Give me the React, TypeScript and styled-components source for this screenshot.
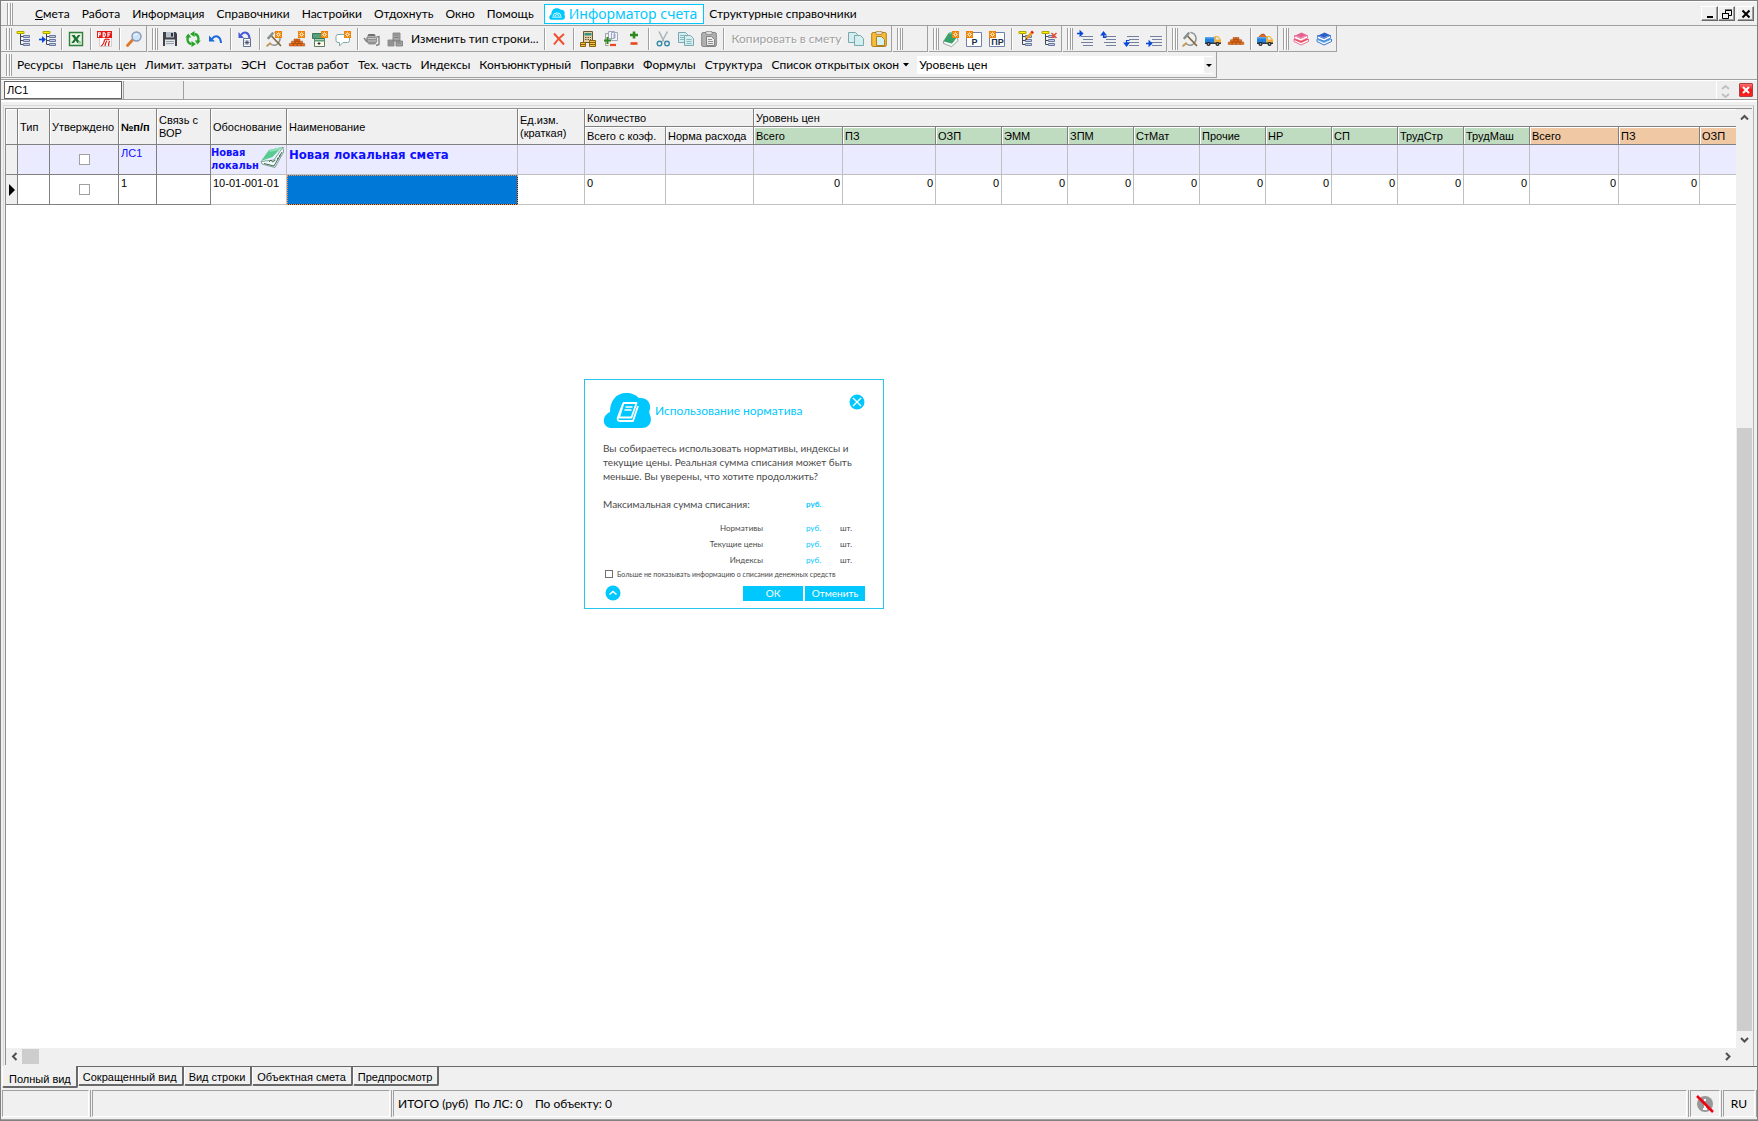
import React from 'react';
import styled, { createGlobalStyle, css } from 'styled-components';

const UI = '"Lato", "Noto Sans", sans-serif';
const GRID = '"Liberation Sans", Arial, sans-serif';
const BOLD = '"DejaVu Sans Condensed", "DejaVu Sans", sans-serif';
const CYAN = '#00c8ff';

const Global = createGlobalStyle`
  * { box-sizing: border-box; }
  body { margin: 0; background: #f0f0f0; color: #000; font: 12px/16px ${UI}; }
  button, input, select { font: inherit; color: inherit; margin: 0; }
  button { background: none; border: 0; padding: 0; }
`;

/* ---------- window frame ---------- */
const Window = styled.div`
  height: 100vh;
  display: flex;
  flex-direction: column;
  overflow: hidden;
  background: #f0f0f0;
  border: 1px solid #808080;
`;
const Row = styled.div<{ $h: number }>`
  display: flex;
  flex: none;
  height: ${p => p.$h}px;
`;
const MenuRow = styled(Row)`
  align-items: center;
  border-top: 1px solid #fff;
  border-bottom: 1px solid #a0a0a0;
  padding: 0 3px 0 6px;
`;
const Grip = styled.span`
  flex: none;
  width: 6px;
  height: 22px;
  margin-right: 1px;
  border: solid #a0a0a0;
  border-width: 0 1px;
  background: linear-gradient(90deg, #fff 1px, #f0f0f0 1px, #f0f0f0 2px, #a0a0a0 2px, #a0a0a0 3px, #fff 3px);
`;
const Menu = styled.nav`
  display: flex;
  gap: 12px;
  padding: 0 10px 0 21px;
`;
const TextButton = styled.button`
  white-space: nowrap;
`;
const Informer = styled.button`
  display: flex;
  align-items: center;
  gap: 4px;
  height: 20px;
  padding: 0 6px 0 4px;
  border: 1px solid ${CYAN};
  background: #fff;
  color: ${CYAN};
  font: 14px/18px "Noto Sans", sans-serif;
`;
const RefButton = styled(TextButton)`
  margin: 0 auto 0 5px;
`;
const MdiButtons = styled.div`
  display: flex;
  button { display: flex; width: 17px; height: 15px; align-items: center; justify-content: center;
    border: 1px solid; border-color: #fff #696969 #696969 #fff; box-shadow: inset -1px -1px #a0a0a0; }
  button:last-child { margin-left: 2px; }
`;

/* ---------- toolbars ---------- */
const Band = styled.div<{ $first?: boolean }>`
  display: flex;
  flex: none;
  align-items: center;
  height: 26px;
  padding-left: ${p => (p.$first ? 5 : 4)}px;
  margin-right: 1px;
  border-right: 1px solid #a0a0a0;
  border-bottom: 1px solid #a0a0a0;
`;
const Tool = styled.button`
  display: flex;
  flex: none;
  width: 23px;
  height: 22px;
  padding-left: 3px;
  align-items: center;
  svg { overflow: visible; }
`;
const ToolText = styled.button`
  padding: 0 4px;
  white-space: nowrap;
  &:disabled { color: #a0a0a0; text-shadow: 1px 1px #fff; }
`;
const Sep = styled.i`
  flex: none;
  width: 6px;
  height: 22px;
  background: linear-gradient(90deg, transparent 2px, #a0a0a0 2px, #a0a0a0 3px, #fff 3px, #fff 4px, transparent 4px);
`;
const Blank = styled.i`
  width: 23px;
`;
const PanelBand = styled(Band)`
  padding-right: 3px;
`;
const PanelButtons = styled.div`
  display: flex;
  gap: 9px;
  padding: 0 8px 0 4px;
`;
const DropMark = styled.svg`
  margin-left: 4px;
  vertical-align: middle;
`;
const SelectBox = styled.div`
  display: flex;
  position: relative;
  width: 296px;
  height: 18px;
  background: #fff;
  select { appearance: none; width: 100%; border: 0; padding: 0 12px 0 2px; background: transparent; outline: none; }
  svg { position: absolute; right: 0; top: 1px; background: #f0f0f0; pointer-events: none; }
`;

/* ---------- address line ---------- */
const AddressRow = styled(Row)`
  margin-top: 1px;
  border-top: 1px solid #a0a0a0;
  border-bottom: 1px solid #a0a0a0;
  box-shadow: inset 0 1px #fff, 0 2px #fff;
  padding: 1px 4px 1px 3px;
  align-items: center;
  background: #eee;
`;
const CellInput = styled.input`
  width: 118px;
  height: 18px;
  padding: 0 2px;
  border: 1px solid #646464;
  background: #fff;
  font: 11px/16px ${GRID};
`;
const AddressPart = styled.div<{ $w: number }>`
  width: ${p => p.$w}px;
  height: 18px;
  margin-left: 1px;
  border-left: 1px solid #a0a0a0;
`;
const Spin = styled.div`
  width: 23px;
  height: 18px;
  margin-left: auto;
  padding-left: 4px;
  border-left: 1px solid #fff;
`;
const CloseRed = styled.button`
  display: flex;
  width: 14px;
  height: 14px;
  align-items: center;
  justify-content: center;
  border: 1px solid #b04040;
  border-radius: 1px;
  background: linear-gradient(#ff7070, #f01818 50%, #ff2020);
`;

/* ---------- grid ---------- */
const GridFrame = styled.main`
  flex: 1;
  min-height: 0;
  display: flex;
  flex-direction: column;
  margin: 5px 3px 0 2px;
  padding: 2px 1px 1px 1px;
  border: 1px solid #d8d8d8;
  border-right-color: #b4b4b4;
  border-bottom: 0;
`;
const GridInner = styled.div`
  flex: 1;
  min-height: 0;
  display: flex;
  border: solid #909090;
  border-width: 1px 0 0 1px;
`;
const GridView = styled.div`
  flex: 1;
  min-width: 0;
  overflow: hidden;
  background: #fff;
`;
const Table = styled.table`
  table-layout: fixed;
  width: 0;
  border-collapse: separate;
  border-spacing: 0;
  font: 11px/13px ${GRID};
`;
type Tone = 'plain' | 'green' | 'orange';
const tones = { plain: '#f0f0f0', green: '#c0dcc0', orange: '#f0c8a4' };
const Th = styled.th<{ $tone?: Tone; $strong?: boolean }>`
  height: 18px;
  padding: 1px 0 0 2px;
  overflow: hidden;
  text-align: left;
  font-weight: ${p => (p.$strong ? 700 : 400)};
  background: ${p => tones[p.$tone ?? 'plain']};
  border: solid #808080;
  border-width: 0 1px 1px 0;
  box-shadow: inset 1px 1px #fff;
  white-space: nowrap;
`;
const Td = styled.td<{
  $kind?: 'fixed' | 'mark' | 'basis';
  $row?: 'head';
  $num?: boolean;
  $active?: boolean;
}>`
  height: 30px;
  padding: 2px 2px 0 2px;
  overflow: hidden;
  vertical-align: top;
  text-align: ${p => (p.$num ? 'right' : 'left')};
  background: ${p => (p.$row ? '#ebebff' : '#fff')};
  color: ${p => (p.$row ? '#1010ff' : '#000')};
  border: solid #c0c0c0;
  border-width: 0 1px 1px 0;
  ${p => (p.$kind === 'fixed' || p.$kind === 'mark') && css`border-color: #808080;`}
  ${p => p.$kind === 'mark' && css`background: #f0f0f0; padding: 9px 0 0 2px;`}
  ${p => p.$kind === 'basis' && css`padding: 1px 2px 0 0;`}
  ${p => p.$active && css`background: #0078d7; outline: 1px dotted #ff9040; outline-offset: -1px; border-color: #303030;`}
`;
const Center = styled.div`
  display: flex;
  justify-content: center;
  padding-top: 7px;
`;
const Check = styled.input`
  appearance: none;
  width: 11px;
  height: 11px;
  margin: 0;
  border: 1px solid #a0a0a0;
  background: #fff;
`;
const Basis = styled.div`
  display: flex;
  justify-content: space-between;
  font: bold 11px/13px ${BOLD};
  span { width: 49px; overflow: hidden; }
  svg { flex: none; }
`;
const EstimateName = styled.div`
  font: bold 13px/16px ${BOLD};
`;

/* ---------- scroll bars ---------- */
const VBar = styled.div`
  display: flex;
  flex-direction: column;
  flex: none;
  width: 16px;
  background: #f0f0f0;
`;
const VTrack = styled.div`
  flex: 1;
  display: flex;
  flex-direction: column;
  justify-content: flex-end;
`;
const VThumb = styled.div`
  height: 66.6%;
  margin-left: 1px;
  background: #cdcdcd;
`;
const Arrow = styled.button`
  display: flex;
  align-items: center;
  justify-content: center;
  width: 16px;
  height: 17px;
`;
const HBar = styled.div`
  display: flex;
  align-items: center;
  height: 17px;
  flex: none;
  padding-right: 17px;
  border-left: 1px solid #909090;
`;
const HThumb = styled.div`
  width: 17px;
  height: 15px;
  margin-right: auto;
  background: #cdcdcd;
`;

/* ---------- tabs and status ---------- */
const Tabs = styled.div`
  display: flex;
  flex: none;
  align-items: flex-start;
  height: 24px;
  padding-left: 1px;
  font: 11px/14px ${GRID};
`;
const Tab = styled.button<{ $on?: boolean }>`
  height: 19px;
  margin-top: 1px;
  padding: 2px 5px 0 4px;
  border: solid #696969;
  border-width: 0 2px 2px 1px;
  border-left-color: #fff;
  box-shadow: 0 -1px #696969;
  border-radius: 0 0 2px 2px;
  white-space: nowrap;
  ${p => p.$on && css`height: 22px; margin-top: 0; padding: 5px 5px 0 6px; box-shadow: none;`}
`;
const TabRest = styled.div`
  flex: 1;
  height: 1px;
  background: #696969;
`;
const Status = styled.footer`
  display: flex;
  flex: none;
  gap: 3px;
  height: 30px;
  padding: 0 2px 0 1px;
  border-bottom: 1px solid #a0a0a0;
`;
const StatusPart = styled.div<{ $w?: number }>`
  display: flex;
  align-items: center;
  ${p => (p.$w ? `width: ${p.$w}px; flex: none; ` : 'flex: 1;')}
  padding: 0 4px;
  margin-bottom: 2px;
  border: 1px solid;
  border-color: #a0a0a0 #fff #fff #a0a0a0;
  box-shadow: 1px 0 #f0f0f0, 2px 0 #a0a0a0;
  white-space: pre;
`;
const StatusCenter = styled(StatusPart)`
  justify-content: center;
`;

/* ---------- dialog ---------- */
const Dialog = styled.section`
  position: absolute;
  left: 584px;
  top: 379px;
  width: 300px;
  height: 230px;
  display: flex;
  flex-direction: column;
  padding: 13px 18px 7px;
  border: 1px solid #28c4ee;
  background: #fff;
  color: #4a4a4a;
  font: 10px/14px ${UI};
`;
const DialogHead = styled.header`
  display: flex;
  height: 36px;
  color: ${CYAN};
  h1 { flex: 1; margin: 10px 0 0 4px; font: 12px/16px ${UI}; }
  button { height: 18px; padding-top: 1px; }
`;
const DialogText = styled.p`
  margin: 12px 0 0;
  white-space: nowrap;
`;
const Sums = styled.dl`
  display: grid;
  grid-template-columns: 160px 1fr 25px;
  grid-template-rows: 23px;
  grid-auto-rows: 16px;
  align-items: center;
  margin: 14px 0 0;
  font-size: 8px;
  dt { text-align: right; }
  dd { margin: 0; }
  dt.total { text-align: left; font-size: 10px; }
  .total { align-self: start; font-weight: 400; }
  dd.total { font-weight: 700; }
`;
const Rub = styled.dd`
  && { padding-left: 43px; color: ${CYAN}; }
`;
const Dont = styled.label`
  display: flex;
  align-items: center;
  gap: 4px;
  height: 12px;
  margin-left: 2px;
  font-size: 7px;
  line-height: 10px;
  white-space: nowrap;
  input { width: 8px; height: 8px; border-color: #707070; }
`;
const Actions = styled.div`
  display: flex;
  gap: 2px;
  margin-top: 5px;
  align-items: center;
`;
const Up = styled.button`
  height: 16px;
  margin: 0 auto 0 2px;
`;
const Action = styled.button`
  width: 60px;
  height: 15px;
  background: ${CYAN};
  color: #fff;
  font: 10px/15px ${UI};
`;

/* ---------- icons ---------- */
const tree = (
  <g fill="none" stroke="#6878a0">
    <path d="M4.500 3v10.500H8M4.500 5.500H8M4.500 9.500H8" stroke="#404858" />
    <path d="M7.500 4.500h6v2h-6zM7.500 8.500h6v2h-6zM7.500 12.500h6v2h-6z" fill="#c4cce4" />
    <path d="M1 .5h7v2H1z" fill="#f6f000" stroke="#b0a800" />
  </g>
);
const spark = (
  <g>
    <path d="M9 0h7v7H9z" fill="#f08000" />
    <path d="M12.500 .8v5.400M9.800 3.500h5.400M10.500 1.500l4 4M14.500 1.500l-4 4" stroke="#fff4d8" strokeWidth=".7" />
    <circle cx="12.500" cy="3.500" r="1.600" fill="#fff4d8" />
    <circle cx="12.500" cy="3.500" r=".9" fill="#f08000" />
  </g>
);
const sparkLeft = <g transform="translate(-9 0)">{spark}</g>;
const bricks = (
  <g fill="#e87020" stroke="#a04810" strokeWidth=".5">
    <path d="M5 6.500h3v2.200H5zM8 6.500h3v2.200H8zM2.500 8.700h3.700v2.300H2.500zM6.200 8.700h3.700v2.300H6.200zM9.900 8.700h3.700v2.300H9.900zM.3 11h3.900v2.500H.3zM4.200 11h3.900v2.500H4.200zM8.100 11h3.900v2.500H8.100zM12 11h3.700v2.500H12z" />
  </g>
);
const hammer = (
  <g fill="none" strokeLinecap="round">
    <path d="M9 1.500c5 1 7 7 2.500 11.500-2.500 2-5.500 1.200-7.500-.5" stroke="#8c9490" strokeWidth="1.500" />
    <path d="M5 4.500l9.500 10" stroke="#806840" strokeWidth="1.700" />
    <path d="M2.500 7l4-4.500" stroke="#88908c" strokeWidth="2.600" />
    <path d="M1.200 14.800l3-2.500" stroke="#c89858" strokeWidth="2" />
  </g>
);
const truck = (
  <g>
    <path d="M0 6h9.500v6H0z" fill="#2080e0" />
    <path d="M0 6h9.500v1.500H0z" fill="#58a8f0" />
    <path d="M9.500 5h3.500L16 8.500V12H9.500z" fill="#f8b030" />
    <path d="M11 6.200h1.700l2 2.300H11z" fill="#d8f0ff" />
    <path d="M0 11.500h16v1.500H0z" fill="#303840" />
    <circle cx="3.500" cy="13" r="2" fill="#202428" /><circle cx="12.500" cy="13" r="2" fill="#202428" />
    <circle cx="3.500" cy="13" r=".8" fill="#ccc" /><circle cx="12.500" cy="13" r=".8" fill="#ccc" />
  </g>
);
const books = (a: string, b: string) => (
  <g strokeLinejoin="round">
    <path d="M1 10.500l7 3.500 7.500-3.500v-2.200H1z" fill="#fff" stroke={a} strokeWidth=".9" />
    <path d="M.6 8.800L8 12l7.700-3.500L13 7H3z" fill={b} />
    <path d="M1.500 7.500L8 10l6.500-3V4.500H1.500z" fill="#fff" stroke={a} strokeWidth=".7" />
    <path d="M1 5l7 3 7-3.500L8.500 1.500z" fill={a} />
    <path d="M3 5l5 2 4.500-2.200" stroke="#fff" strokeOpacity=".5" fill="none" strokeWidth=".8" />
  </g>
);
const lines = <path d="M4 5.500h12M6 8.500h10M4 11.500h12M6 14.500h10" stroke="#7480a0" />;
const arrowR = (x: number, y: number) => (
  <path transform={`translate(${x} ${y})`} d="M0 2.500h4M3.200 .3L5.600 2.500 3.200 4.700z" stroke="#0848d8" strokeWidth="1.300" fill="#0848d8" />
);
const greenBook = (
  <g strokeLinejoin="round">
    <path d="M.5 10v2.500l8 3.200 6.500-6-1-3.700-5 6z" fill="#f4f8f6" stroke="#70887c" strokeWidth=".7" />
    <path d="M.5 10L5.500 2l9 3L9 12.500z" fill="#38a068" />
    <path d="M5.500 2l2-1 8 2.500-1 1.500z" fill="#58b888" />
  </g>
);
const docLetter = (t: string) => (
  <g>
    <path d="M.5 1.500h15v14H.5z" fill="#fff" stroke="#7080a8" />
    <text x="8.500" y="13.500" fontSize="9" fontWeight="700" fontFamily="Liberation Sans" textAnchor="middle" fill="#203048">{t}</text>
    {sparkLeft}
  </g>
);
const clip = (board: string, page: string, ink: string) => (
  <g>
    <rect x=".7" y="1.500" width="14.600" height="14" rx="1.500" fill={board} stroke={ink} />
    <path d="M5 .5h6v3H5z" fill="#ddd" stroke={ink} strokeWidth=".7" />
    <path d="M5.500 5.500h5l3 3v6h-8z" fill={page} stroke={ink} />
  </g>
);
const copies = (line: boolean) => (
  <g fill="#d4eef0" stroke="#78a8b0">
    <path d="M.5 1.500h7l2 2v8h-9z" />
    <path d="M6.500 4.500h6l3 3v7h-9z" />
    {line && <path d="M2 4.500h4M2 6.500h4M2 8.500h4M8.500 8.500h5M8.500 10.500h5M8.500 12.500h5" strokeWidth=".8" />}
  </g>
);
const pieces: Record<string, React.ReactNode> = {
  tree,
  treeArrow: <g><g transform="translate(3 0)">{tree}</g><path d="M0 8.500h5" stroke="#0848d8" strokeWidth="1.600" /><path d="M3 5l4 3.500L3 12z" fill="#0848d8" /></g>,
  excel: <g><path d="M1.500 1.500h13v13h-13z" fill="#e8f4e8" stroke="#308038" strokeWidth="1.400" /><path d="M3.500 4h3.200l1.500 2.600L10 4h2.500L9.500 8l3.200 4H9.300L7.700 9.500 6 12H3.300l3-4z" fill="#1c7030" /><path d="M10 10.500h3v2h-3z" fill="#90c898" /></g>,
  pdf: <g><path d="M2.500 1h12v14.500h-12z" fill="#fff" stroke="#d0d0d0" /><path d="M0 0h15v7H0z" fill="#e81818" /><path d="M1.500 6V1.800h1.700v2H1.500M6.200 1.800v3.800h1.100l.9-1V2.700l-.9-.9zM10.900 6V1.800h2.700M10.900 3.800h2" fill="none" stroke="#fff" strokeWidth="1.100" /><path d="M4 15c2-1 3-3 3.500-6 1-1.500 4-1 5 0M8 15c0-2 1-4 2-5.500M11.500 15c0-2 0-3 1-5" stroke="#e02020" strokeWidth="1.300" fill="none" /></g>,
  lens: <g fill="none"><path d="M1.500 14.500l5-5.500" stroke="#e07828" strokeWidth="2.800" strokeLinecap="round" /><circle cx="10.500" cy="5.500" r="4.500" fill="#cce4fa" stroke="#8898b8" strokeWidth="1.400" /><path d="M8 5c.6-1.300 1.500-1.800 3-1.700" stroke="#fff" /></g>,
  save: <g><path d="M1 1h12.500L15 2.500V15H1z" fill="#404048" /><path d="M4 1h8v5.500H4z" fill="#b8c0cc" /><path d="M9 2h2v3.500H9z" fill="#303038" /><path d="M3 8.500h10V15H3z" fill="#e4e8ec" /><path d="M4 10.500h8M4 12.500h8" stroke="#98a0a8" /></g>,
  refresh: <g fill="none" stroke="#28a428" strokeWidth="2.300"><path d="M12.800 10.500c1.600-3 .5-7-3.300-7.500M3.200 5.500c-1.600 3-.5 7 3.300 7.500" /><path d="M9.500 0L5 3l4.500 3zM6.500 10l4.500 3-4.500 3zM9.700 9.500h6l-3 4zM.3 6.500h6l-3-4z" fill="#28a428" stroke="none" /></g>,
  undo: <g fill="none"><path d="M4 8c3-4.500 8.500-3.500 9 4" stroke="#1868e0" strokeWidth="2" /><path d="M1 4.500v6h6z" fill="#1868e0" /></g>,
  undoDoc: <g fill="none"><path d="M4 4C7-.5 12 1.500 12.500 7" stroke="#4858d8" strokeWidth="2" /><path d="M1.500 1v6h5.500z" fill="#4858d8" /><path d="M6.500 7.500h7v8h-7z" fill="#fff" stroke="#607090" /><path d="M8 9.500l4 4M12 9.500l-4 4M10 9v5M7.500 11.500h5" stroke="#304060" strokeWidth=".8" /></g>,
  hammerNew: <g>{hammer}{spark}</g>,
  bricksNew: <g><g transform="translate(0 1.500)">{bricks}</g>{spark}</g>,
  calcNew: <g><path d="M2.500 7.500h10v8h-10z" fill="#fffbe8" stroke="#607868" /><path d="M.5 2.500h12v5H.5z" fill="#58a078" stroke="#387858" /><path d="M2.500 9.500h10" stroke="#58a078" strokeWidth="2" /><path d="M5.500 12.500h3M7 11v3" stroke="#333" />{spark}</g>,
  noteNew: <g><path d="M3 3.500h9.500a2 2 0 012 2v4a2 2 0 01-2 2H8L4.500 15v-3.500H3a2 2 0 01-2-2v-4a2 2 0 012-2z" fill="#fff" stroke="#80a8a8" />{spark}</g>,
  teapot: <g fill="#909090"><path d="M2.500 6h10c1.500 3 .5 6-1.500 7.500H5C2.500 12 1.500 9 2.500 6z" /><path d="M4.500 3h6l1.500 2.500H3z" fill="#707070" /><path d="M3 11L0 7M12.500 6l2.500-.5v8l-3 1" stroke="#808080" fill="none" strokeWidth="1.400" /><path d="M4 7.500h8M4 10h8" stroke="#c8c8c8" /></g>,
  factory: <g fill="#a4a4a4" stroke="#787878" strokeWidth=".8"><path d="M6 2h7v8H6zM1 9h6v6H1zM9 10h6.500v5H9z" /><path d="M7.500 4h4M7.500 6.500h4M2 11h4M2 13h4M10 12h4" /></g>,
  cross: <path d="M3 2.500l10 11M13 3c-4 3-7 6-10 10.500" stroke="#f05030" strokeWidth="2" fill="none" />,
  calcCoins: <g><path d="M3.500.5h9v11h-9z" fill="#e0d0a8" stroke="#705830" /><path d="M4.500 2h7v2.500h-7z" fill="#389080" /><path d="M5 6.500h6M5 8.500h6" stroke="#705830" strokeDasharray="1.500 1" /><path d="M.5 11.500h5v4h-5zM9.500 9.500h6v6h-6z" fill="#f0c840" stroke="#886010" /><path d="M.5 13.500h5M9.500 11.500h6M9.500 13.500h6" stroke="#886010" /></g>,
  docPm: <g><path d="M5.500.5h6v7h-6zM8.500 1.500h6v8h-6z" fill="#f4f4fc" stroke="#a0a8c0" /><path d="M10 4h3M10 6h3" stroke="#a0a8c0" /><path d="M5 2.500H2.500V14.500h3" fill="none" stroke="#a0a0a0" /><path d="M1 9.500h7M4.500 6v7" stroke="#30881c" strokeWidth="2" /><path d="M7 14h6" stroke="#e84820" strokeWidth="2.200" /></g>,
  pm: <g><path d="M4 4h8M8 .5v7" stroke="#30881c" strokeWidth="2.600" /><path d="M4.500 12.500h7" stroke="#e84820" strokeWidth="2.600" /></g>,
  cut: <g fill="none"><path d="M4 .5l5 10M12.500 .5L7 10.500" stroke="#a8b4b8" strokeWidth="1.500" /><circle cx="4.500" cy="12.500" r="2.300" stroke="#3888a8" strokeWidth="1.400" /><circle cx="12" cy="12.500" r="2.300" stroke="#3888a8" strokeWidth="1.400" /></g>,
  copy: copies(true),
  copyTeal: copies(false),
  pasteGray: <g>{clip('#b0b0b0', '#ececec', '#848484')}<path d="M7 8.500h4M7 10.500h5M7 12.500h5" stroke="#909090" /></g>,
  paste: clip('#f8bc38', '#d4f0f0', '#b08020'),
  bookNew: <g>{greenBook}{spark}</g>,
  docP: docLetter('Р'),
  docPR: docLetter('ПР'),
  treeEdit: <g>{tree}<path d="M8 8l6.500-7" stroke="#e8a020" strokeWidth="2.600" /><path d="M13.500 2l1.500-1.500" stroke="#e02020" strokeWidth="2.600" /><path d="M7 9.500l1.200-2.500 1 1z" fill="#222" /></g>,
  treeDel: <g>{tree}<path d="M10.500 2l5 5M15.500 2l-5 5" stroke="#f04830" strokeWidth="1.500" /></g>,
  lineInR: <g>{lines}<path d="M0 3h4v4H0z" fill="#f0f0f0" />{arrowR(0, 0)}</g>,
  lineUp: <g>{lines}<path d="M3.500 7V2.500M1.200 4L3.500 1 5.800 4zM3.500 6.300h3" stroke="#0848d8" strokeWidth="1.200" fill="#0848d8" /></g>,
  lineDown: <g>{lines}<path d="M3.500 9v4.500M1.200 12l2.300 3 2.300-3zM3.500 9.500h3" stroke="#0848d8" strokeWidth="1.200" fill="#0848d8" /></g>,
  lineOut: <g>{lines}<path d="M0 10h4v5H0z" fill="#f0f0f0" />{arrowR(0, 10)}</g>,
  hammer,
  truck,
  bricks,
  truckFull: <g><path d="M1.500 6.500L4 3.500l3-.5 2.500 3.500z" fill="#e06818" stroke="#8c3808" strokeWidth=".6" />{truck}</g>,
  booksPink: books('#e86090', '#e85060'),
  booksBlue: books('#2860c8', '#58a8e8'),
};
const Icon = ({ name }: { name: string }) => (
  <svg width="16" height="16" viewBox="0 0 16 16" aria-hidden="true">{pieces[name]}</svg>
);

const Chevron = ({ d }: { d: string }) => (
  <svg width="9" height="9" viewBox="0 0 9 9" fill="none" stroke="#505050" strokeWidth="2" aria-hidden="true"><path d={d} /></svg>
);
const Cloud = ({ w, h, children }: { w: number; h: number; children: React.ReactNode }) => (
  <svg width={w} height={h} viewBox="0 0 48 35" aria-hidden="true">
    <path d="M9 35C-1 35-2 23 7 19 7 8 13 0 23 0c6 0 10 2 13 5 8-1 12 5 11 11-1 3-1 3 0 6 3 8-2 13-8 13z" fill={CYAN} />
    {children}
  </svg>
);

/* ---------- data ---------- */
const menu = ['Смета', 'Работа', 'Информация', 'Справочники', 'Настройки', 'Отдохнуть', 'Окно', 'Помощь'];
const bands: string[][] = [
  ['tree', 'treeArrow', '|', 'excel', '|', 'pdf', '|', 'lens'],
  ['save', 'refresh', 'undo', '|', 'undoDoc', '|', 'hammerNew', 'bricksNew', 'calcNew', 'noteNew', '|', 'teapot', 'factory',
    'Изменить тип строки...', '|', 'cross', '|', 'calcCoins', 'docPm', 'pm', '|', 'cut', 'copy', 'pasteGray', '|',
    'Копировать в смету', 'copyTeal', 'paste'],
  [''],
  ['bookNew', 'docP', 'docPR', '|', 'treeEdit', 'treeDel'],
  ['lineInR', 'lineUp', 'lineDown', 'lineOut'],
  ['hammer', 'truck', 'bricks', '|', 'truckFull'],
  ['booksPink', 'booksBlue'],
];
const panels = ['Ресурсы', 'Панель цен', 'Лимит. затраты', 'ЭСН', 'Состав работ', 'Тех. часть', 'Индексы', 'Конъюнктурный',
  'Поправки', 'Формулы', 'Структура'];
const widths = [12, 32, 69, 38, 54, 76, 231, 67, 81, 88, 89, 93, 66, 66, 66, 66, 66, 66, 66, 66, 66, 89, 81, 66];
const green = ['Всего', 'ПЗ', 'ОЗП', 'ЭММ', 'ЗПМ', 'СтМат', 'Прочие', 'НР', 'СП', 'ТрудСтр', 'ТрудМаш'];
const orange = ['Всего', 'ПЗ', 'ОЗП'];
const values = [...green, ...orange];
const tabs = ['Полный вид', 'Сокращенный вид', 'Вид строки', 'Объектная смета', 'Предпросмотр'];

const ToolItem = ({ id }: { id: string }) => {
  if (id === '|') return <Sep />;
  if (id === '') return <Blank />;
  if (pieces[id]) return <Tool type="button" aria-label={id}><Icon name={id} /></Tool>;
  return <ToolText type="button" disabled={id.startsWith('Коп')}>{id}</ToolText>;
};

export default function App() {
  return (
    <Window>
      <Global />
      <MenuRow $h={25}>
        <Grip />
        <Menu>
          {menu.map((m, i) => (
            <TextButton key={m} type="button">{i ? m : <><u>{m[0]}</u>{m.slice(1)}</>}</TextButton>
          ))}
        </Menu>
        <Informer type="button">
          <Cloud w={16} h={12}><path d="M12 25a12 11 0 0124 0M18 25a6 6 0 0112 0M10 27h28" fill="none" stroke="#fff" strokeWidth="2.500" /></Cloud>
          Информатор счета
        </Informer>
        <RefButton type="button">Структурные справочники</RefButton>
        <MdiButtons>
          <button type="button" aria-label="Свернуть"><svg width="10" height="10"><path d="M2 8h6" stroke="#000" strokeWidth="2" /></svg></button>
          <button type="button" aria-label="Восстановить"><svg width="10" height="10" fill="none" stroke="#000"><path d="M3.500 4V1.500h6v5H7M3 1h7M.5 4.500h6v5h-6zM0 4.500h7" /></svg></button>
          <button type="button" aria-label="Закрыть"><svg width="10" height="10"><path d="M1.500 1.500l7 7M8.500 1.500l-7 7" stroke="#000" strokeWidth="2" /></svg></button>
        </MdiButtons>
      </MenuRow>

      <Row $h={26}>
        {bands.map((band, b) => (
          <Band key={b} $first={b === 0}>
            <Grip />
            {band.map((id, i) => <ToolItem key={i} id={id} />)}
          </Band>
        ))}
      </Row>

      <Row $h={26}>
        <PanelBand $first>
          <Grip />
          <PanelButtons>
            {panels.map(p => <TextButton key={p} type="button">{p}</TextButton>)}
            <TextButton type="button">
              Список открытых окон
              <DropMark width="6" height="4"><path d="M0 0h6L3 3.500z" /></DropMark>
            </TextButton>
          </PanelButtons>
          <SelectBox>
            <select aria-label="Уровень цен"><option>Уровень цен</option></select>
            <svg width="9" height="16"><path d="M2 7h6l-3 3z" /></svg>
          </SelectBox>
        </PanelBand>
      </Row>

      <AddressRow $h={21}>
        <CellInput aria-label="Ячейка" defaultValue="ЛС1" />
        <AddressPart $w={59} />
        <AddressPart $w={59} />
        <Spin>
          <svg width="9" height="18" fill="none" stroke="#c0c0c0" strokeWidth="2"><path d="M1 8l3.500-3L8 8M1 13l3.500 3L8 13" /></svg>
        </Spin>
        <CloseRed type="button" aria-label="Закрыть строку">
          <svg width="8" height="8"><path d="M1 1l6 6M7 1L1 7" stroke="#fff" strokeWidth="2" /></svg>
        </CloseRed>
      </AddressRow>

      <GridFrame>
        <GridInner>
          <GridView>
            <Table>
              <colgroup>{widths.map((w, i) => <col key={i} width={w} />)}</colgroup>
              <thead>
                <tr>
                  <Th rowSpan={2} />
                  <Th rowSpan={2}>Тип</Th>
                  <Th rowSpan={2}>Утверждено</Th>
                  <Th rowSpan={2} $strong>№п/п</Th>
                  <Th rowSpan={2}>Связь с<br />ВОР</Th>
                  <Th rowSpan={2}>Обоснование</Th>
                  <Th rowSpan={2}>Наименование</Th>
                  <Th rowSpan={2}>Ед.изм.<br />(краткая)</Th>
                  <Th colSpan={2}>Количество</Th>
                  <Th colSpan={14}>Уровень цен</Th>
                </tr>
                <tr>
                  <Th>Всего с коэф.</Th>
                  <Th>Норма расхода</Th>
                  {green.map(g => <Th key={g} $tone="green">{g}</Th>)}
                  {orange.map(g => <Th key={g} $tone="orange">{g}</Th>)}
                </tr>
              </thead>
              <tbody>
                <tr>
                  <Td $kind="mark" />
                  <Td $row="head" $kind="fixed" />
                  <Td $row="head" $kind="fixed"><Center><Check type="checkbox" aria-label="Утверждено ЛС1" /></Center></Td>
                  <Td $row="head" $kind="fixed">ЛС1</Td>
                  <Td $row="head" $kind="fixed" />
                  <Td $row="head" $kind="basis">
                    <Basis>
                      <span>Новая<br />локальн</span>
                      <svg width="24" height="24" viewBox="0 0 24 24" aria-hidden="true">
                        <path d="M1 15.500L14 14l9-13 .5 5L15 21.500 2 18z" fill="#f4fafa" stroke="#709888" strokeWidth=".9" />
                        <path d="M1 15L9 4l13-3-9.500 10z" fill="#58cc90" />
                        <path d="M9 4l13-3-3 3-9 2z" fill="#8ce0b4" />
                        <path d="M9 16l2-2 1.500 2 3-2M4 17.500l10 2.500L22 6M17 12l1.500 1M19 9l1.500 1" stroke="#406858" fill="none" />
                      </svg>
                    </Basis>
                  </Td>
                  <Td $row="head"><EstimateName>Новая локальная смета</EstimateName></Td>
                  {Array.from({ length: 17 }, (_, i) => <Td key={i} $row="head" />)}
                </tr>
                <tr>
                  <Td $kind="mark"><svg width="7" height="12"><path d="M1 0l6 6-6 6z" /></svg></Td>
                  <Td $kind="fixed" />
                  <Td $kind="fixed"><Center><Check type="checkbox" aria-label="Утверждено 1" /></Center></Td>
                  <Td $kind="fixed">1</Td>
                  <Td $kind="fixed" />
                  <Td>10-01-001-01</Td>
                  <Td $active />
                  <Td />
                  <Td>0</Td>
                  <Td />
                  {values.map((_, i) => <Td key={i} $num>{i < 13 ? 0 : ''}</Td>)}
                </tr>
              </tbody>
            </Table>
          </GridView>
          <VBar>
            <Arrow type="button" aria-label="Вверх"><Chevron d="M1 6.500L4.500 3 8 6.500" /></Arrow>
            <VTrack><VThumb /></VTrack>
            <Arrow type="button" aria-label="Вниз"><Chevron d="M1 3l3.500 3.500L8 3" /></Arrow>
          </VBar>
        </GridInner>
        <HBar>
          <Arrow type="button" aria-label="Влево"><Chevron d="M6.500 1L3 4.500 6.500 8" /></Arrow>
          <HThumb />
          <Arrow type="button" aria-label="Вправо"><Chevron d="M3 1l3.500 3.500L3 8" /></Arrow>
        </HBar>
      </GridFrame>

      <Tabs>
        {tabs.map((t, i) => <Tab key={t} type="button" $on={i === 0}>{t}</Tab>)}
        <TabRest />
      </Tabs>
      <Status>
        <StatusPart $w={87} />
        <StatusPart $w={298} />
        <StatusPart>{'ИТОГО (руб)  По ЛС: 0    По объекту: 0'}</StatusPart>
        <StatusCenter $w={30}>
          <svg width="18" height="18" aria-hidden="true">
            <circle cx="9" cy="9" r="8" fill="#989898" />
            <path d="M9 4v2M9 8v6M7 14h4" stroke="#fff" strokeWidth="2" />
            <path d="M1 1l16 16" stroke="#f00010" strokeWidth="2.500" />
          </svg>
        </StatusCenter>
        <StatusCenter $w={32}>RU</StatusCenter>
      </Status>

      <Dialog role="dialog" aria-label="Использование норматива">
        <DialogHead>
          <Cloud w={48} h={35}>
            <path d="M20 11l-5 13c-1 3 0 4 2 4h13l5-15" fill="none" stroke="#fff" strokeWidth="1.800" strokeLinejoin="round" />
            <path d="M20.500 10h13l-5 14.500H16z" fill={CYAN} stroke="#fff" strokeWidth="1.800" strokeLinejoin="round" />
            <path d="M22.500 14h7M21.500 17h7" stroke="#fff" strokeWidth="1.500" />
          </Cloud>
          <h1>Использование норматива</h1>
          <button type="button" aria-label="Закрыть">
            <svg width="16" height="16"><circle cx="8" cy="8" r="7.500" fill={CYAN} /><path d="M4 4l8 8M12 4l-8 8" stroke="#fff" strokeWidth="1.300" /></svg>
          </button>
        </DialogHead>
        <DialogText>
          Вы собираетесь использовать нормативы, индексы и<br />
          текущие цены. Реальная сумма списания может быть<br />
          меньше. Вы уверены, что хотите продолжить?
        </DialogText>
        <Sums>
          <dt className="total">Максимальная сумма списания:</dt><Rub className="total">руб.</Rub><dd />
          {['Нормативы', 'Текущие цены', 'Индексы'].map(n => (
            <React.Fragment key={n}><dt>{n}</dt><Rub>руб.</Rub><dd>шт.</dd></React.Fragment>
          ))}
        </Sums>
        <Dont><Check type="checkbox" />Больше не показывать информацию о списании денежных средств</Dont>
        <Actions>
          <Up type="button" aria-label="Свернуть подробности">
            <svg width="16" height="16"><circle cx="8" cy="8" r="7.500" fill={CYAN} /><path d="M4.500 9.500L8 6.500l3.500 3" stroke="#fff" strokeWidth="1.500" fill="none" /></svg>
          </Up>
          <Action type="button">ОК</Action>
          <Action type="button">Отменить</Action>
        </Actions>
      </Dialog>
    </Window>
  );
}
